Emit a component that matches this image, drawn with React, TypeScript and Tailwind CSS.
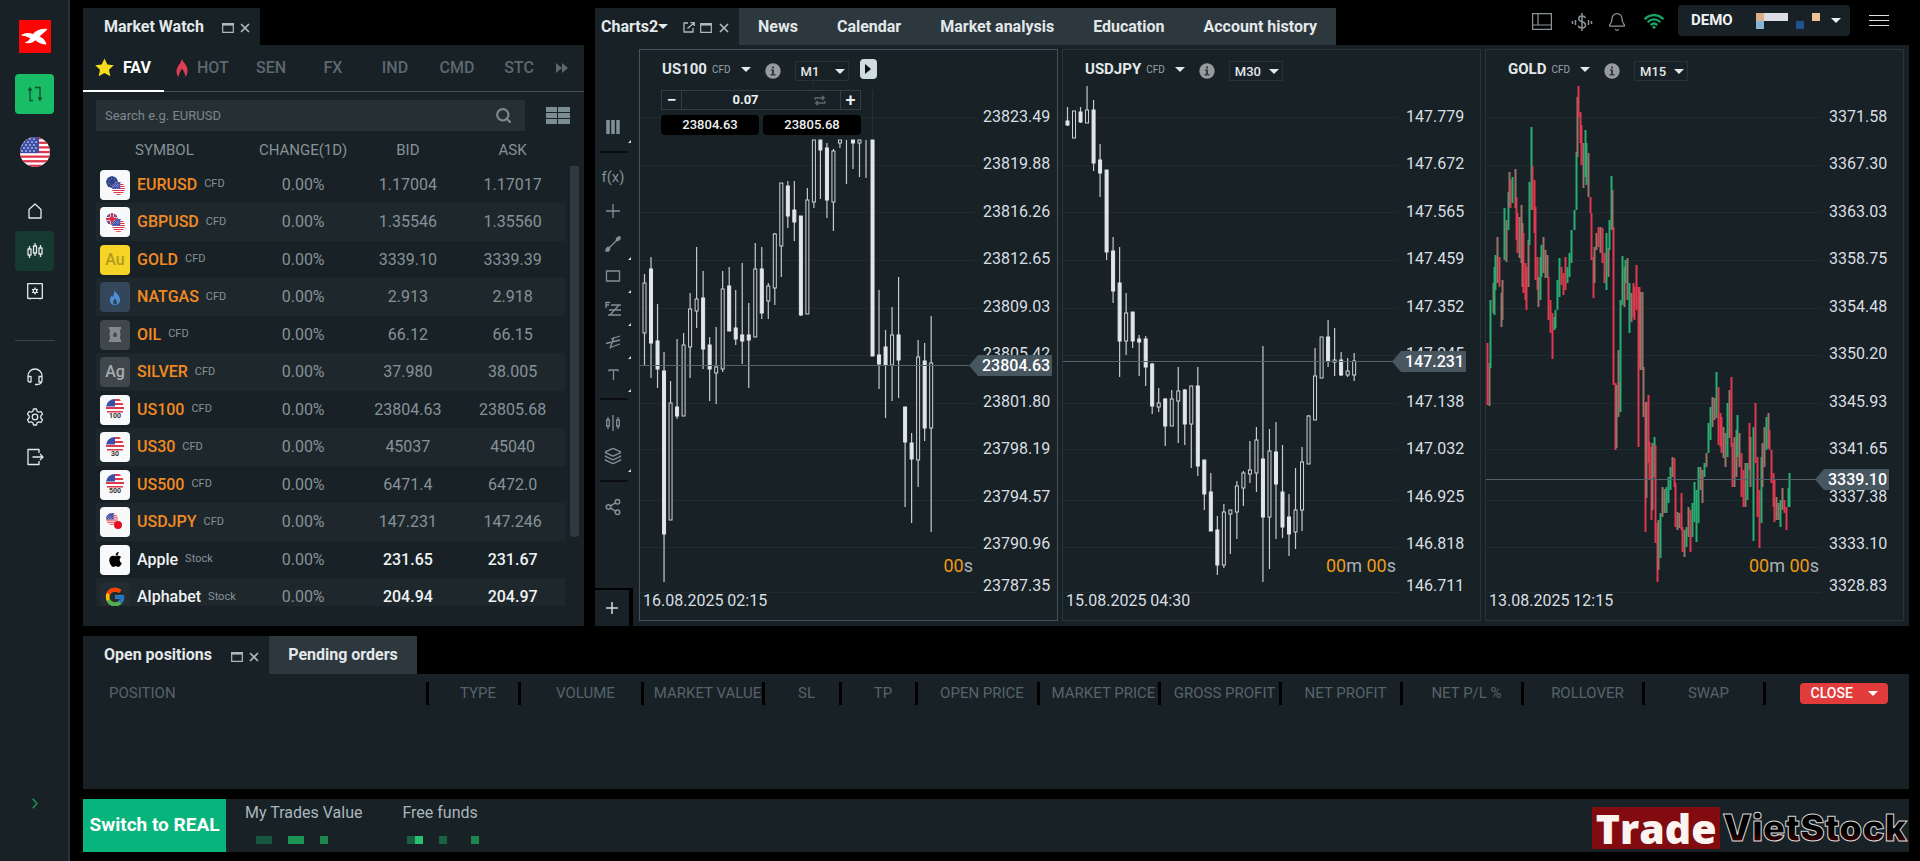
import { useState, type ReactNode } from "react";
import { Bell, Layers, Search, Share2, X } from "lucide-react";
import { FaApple } from "react-icons/fa";
import { FcGoogle } from "react-icons/fc";

// open, body and wick levels: high, body top, body bottom, low, 1 = filled
type Candle = [number, number, number, number, number];

const us100: Candle[] = [
    [224, 233, 283, 315, 0], [207, 219, 293, 328, 1], [254, 291, 319, 338, 1], [302, 321, 484, 532, 1], [331, 353, 470, 470, 0],
    [289, 357, 366, 369, 1], [283, 295, 366, 366, 0], [243, 259, 297, 328, 0], [197, 249, 261, 278, 0], [221, 248, 299, 319, 1],
    [287, 295, 319, 351, 1], [277, 317, 323, 354, 0], [221, 239, 319, 322, 0], [217, 236, 281, 281, 1], [240, 278, 289, 295, 1],
    [213, 285, 291, 314, 1], [253, 285, 290, 338, 1], [193, 219, 287, 287, 0], [197, 219, 263, 269, 1], [233, 236, 251, 269, 0],
    [183, 184, 238, 255, 0], [133, 133, 196, 227, 0], [131, 136, 166, 178, 1], [131, 160, 172, 191, 1], [166, 166, 265, 266, 1],
    [138, 150, 264, 264, 0], [90, 90, 152, 158, 0], [90, 90, 100, 149, 1], [93, 98, 150, 168, 1], [99, 101, 152, 181, 0],
    [90, 90, 93, 98, 0], [90, 90, 90, 134, 1], [90, 90, 93, 119, 1], [90, 90, 93, 127, 0], [90, 90, 90, 128, 1],
    [90, 90, 306, 306, 1], [240, 305, 314, 339, 1], [280, 297, 315, 368, 1], [257, 285, 315, 351, 0], [227, 285, 310, 348, 1],
    [357, 357, 392, 457, 1], [383, 393, 409, 473, 1], [290, 307, 410, 437, 0], [293, 311, 378, 391, 1], [266, 313, 378, 482, 0],
];

const usdjpy: Candle[] = [
    [57, 71, 75, 76, 1], [61, 61, 88, 88, 0], [57, 62, 72, 73, 1], [36, 60, 73, 73, 0], [50, 60, 113, 121, 1],
    [94, 110, 123, 147, 1], [120, 120, 202, 210, 1], [187, 201, 241, 253, 1], [197, 233, 291, 327, 1], [243, 263, 291, 305, 0],
    [262, 262, 291, 298, 1], [285, 289, 292, 326, 1], [286, 289, 317, 336, 1], [313, 314, 356, 364, 1], [338, 353, 357, 362, 0],
    [348, 349, 376, 396, 1], [340, 349, 376, 376, 0], [317, 341, 351, 393, 0], [339, 340, 374, 395, 1], [336, 336, 374, 418, 0],
    [317, 336, 416, 426, 1], [410, 410, 444, 460, 1], [423, 442, 481, 481, 1], [466, 480, 515, 525, 1], [454, 462, 515, 518, 0],
    [460, 460, 464, 504, 0], [431, 436, 462, 489, 0], [421, 423, 438, 456, 0], [391, 420, 424, 433, 0], [377, 390, 423, 442, 0],
    [296, 409, 467, 532, 1], [379, 401, 467, 519, 0], [372, 402, 434, 489, 1], [395, 442, 477, 488, 1], [444, 467, 484, 506, 1],
    [418, 460, 482, 499, 0], [397, 412, 460, 481, 0], [365, 366, 414, 414, 0], [298, 326, 370, 370, 0], [287, 287, 328, 328, 0],
    [270, 287, 311, 317, 1], [278, 310, 312, 326, 0], [302, 310, 325, 326, 1], [308, 321, 325, 327, 0], [303, 311, 325, 331, 0],
];

// x, top, bottom, colour
type Bar = [number, number, number, "r" | "g" | "m"];

const gold: Bar[] = [
    [1, 293, 355, "r"], [3, 313, 356, "m"], [4, 250, 318, "g"], [7, 233, 263, "m"], [8, 217, 265, "g"], [9, 205, 240, "g"],
    [11, 187, 233, "m"], [13, 207, 237, "r"], [15, 243, 277, "m"], [16, 230, 270, "m"], [18, 158, 210, "g"], [20, 170, 212, "m"],
    [22, 142, 180, "g"], [23, 122, 157, "m"], [24, 130, 158, "r"], [26, 127, 153, "g"], [29, 119, 158, "m"], [30, 147, 190, "r"],
    [31, 163, 203, "r"], [33, 167, 208, "m"], [35, 155, 213, "m"], [36, 173, 237, "m"], [37, 183, 243, "r"], [39, 213, 250, "r"],
    [40, 217, 260, "r"], [42, 190, 237, "m"], [43, 132, 195, "g"], [45, 77, 160, "g"], [46, 116, 160, "r"], [48, 130, 183, "r"],
    [49, 157, 230, "r"], [51, 207, 240, "r"], [52, 227, 257, "m"], [54, 207, 250, "g"], [55, 195, 227, "g"], [57, 187, 223, "m"],
    [59, 200, 228, "m"], [61, 205, 228, "m"], [62, 227, 270, "r"], [64, 250, 283, "r"], [66, 263, 309, "r"], [68, 267, 280, "g"],
    [69, 260, 278, "g"], [71, 230, 260, "g"], [73, 208, 247, "g"], [75, 217, 235, "r"], [77, 223, 245, "r"], [79, 207, 240, "r"],
    [81, 217, 233, "g"], [83, 203, 227, "g"], [85, 180, 213, "g"], [88, 160, 180, "g"], [90, 102, 160, "g"], [91, 47, 107, "m"],
    [92, 36, 67, "r"], [94, 62, 93, "r"], [95, 75, 115, "r"], [97, 93, 138, "m"], [99, 80, 127, "g"], [100, 93, 135, "g"],
    [102, 103, 147, "m"], [104, 147, 163, "r"], [105, 163, 210, "r"], [107, 207, 248, "r"], [108, 197, 233, "m"], [110, 183, 200, "m"],
    [112, 177, 197, "r"], [114, 177, 203, "m"], [116, 178, 213, "r"], [118, 203, 233, "r"], [120, 183, 240, "g"], [122, 198, 227, "m"],
    [123, 170, 200, "g"], [125, 126, 180, "g"], [126, 140, 180, "m"], [127, 177, 335, "r"], [129, 333, 400, "r"], [130, 335, 398, "m"],
    [132, 300, 367, "m"], [133, 332, 360, "r"], [134, 250, 362, "g"], [136, 206, 255, "g"], [138, 217, 257, "m"], [139, 210, 233, "g"],
    [141, 208, 250, "m"], [143, 233, 283, "g"], [145, 243, 272, "m"], [147, 233, 267, "r"], [148, 237, 270, "r"], [150, 215, 260, "r"],
    [152, 237, 397, "r"], [153, 237, 317, "r"], [154, 242, 320, "m"], [156, 242, 320, "m"], [157, 317, 367, "m"], [159, 352, 482, "r"],
    [160, 352, 448, "m"], [162, 345, 413, "r"], [163, 392, 430, "r"], [165, 397, 470, "r"], [166, 393, 460, "m"], [168, 387, 427, "g"],
    [169, 395, 493, "r"], [171, 473, 532, "r"], [172, 470, 520, "m"], [174, 463, 508, "g"], [176, 437, 467, "m"], [178, 439, 463, "m"],
    [180, 437, 463, "g"], [182, 427, 453, "g"], [184, 417, 440, "g"], [186, 407, 427, "m"], [188, 408, 437, "r"], [189, 433, 477, "r"],
    [191, 462, 480, "m"], [193, 463, 478, "m"], [195, 443, 480, "r"], [196, 477, 502, "r"], [198, 480, 507, "m"], [200, 477, 497, "g"],
    [202, 457, 487, "m"], [204, 460, 502, "r"], [206, 453, 487, "g"], [208, 432, 472, "g"], [210, 440, 492, "g"], [212, 417, 473, "g"],
    [214, 417, 440, "m"], [216, 420, 453, "m"], [218, 413, 427, "g"], [220, 403, 417, "m"], [222, 373, 403, "g"], [224, 357, 390, "g"],
    [226, 347, 377, "m"], [228, 348, 370, "m"], [230, 322, 368, "g"], [232, 337, 395, "r"], [234, 363, 397, "r"], [235, 367, 403, "r"],
    [237, 377, 408, "m"], [239, 383, 417, "m"], [241, 353, 407, "g"], [243, 340, 388, "m"], [245, 327, 397, "r"], [246, 393, 437, "r"],
    [248, 387, 437, "m"], [250, 380, 427, "m"], [251, 365, 407, "g"], [253, 383, 417, "m"], [255, 403, 447, "r"], [257, 420, 457, "r"],
    [259, 413, 457, "m"], [261, 413, 450, "g"], [263, 373, 420, "r"], [264, 387, 437, "m"], [267, 377, 491, "g"], [269, 353, 413, "r"],
    [271, 407, 467, "r"], [273, 440, 498, "r"], [275, 407, 473, "g"], [276, 393, 437, "m"], [278, 377, 417, "m"], [280, 367, 400, "g"],
    [282, 363, 398, "m"], [283, 380, 400, "r"], [285, 400, 433, "r"], [287, 423, 457, "r"], [288, 430, 472, "r"], [290, 447, 470, "m"],
    [292, 453, 470, "m"], [294, 450, 477, "g"], [296, 438, 460, "m"], [298, 450, 463, "r"], [300, 457, 480, "r"], [302, 438, 457, "g"],
    [303, 423, 457, "g"],
];

const barColors = { r: "#e0394f", g: "#27ae72", m: "#9a7468" };
const gridLines = [67, 115, 162, 210, 258, 305, 353, 399, 450, 497, 542];

const symbols = [
    { name: "EURUSD", kind: "CFD", bid: "1.17004", ask: "1.17017" },
    { name: "GBPUSD", kind: "CFD", bid: "1.35546", ask: "1.35560" },
    { name: "GOLD", kind: "CFD", bid: "3339.10", ask: "3339.39" },
    { name: "NATGAS", kind: "CFD", bid: "2.913", ask: "2.918" },
    { name: "OIL", kind: "CFD", bid: "66.12", ask: "66.15" },
    { name: "SILVER", kind: "CFD", bid: "37.980", ask: "38.005" },
    { name: "US100", kind: "CFD", bid: "23804.63", ask: "23805.68" },
    { name: "US30", kind: "CFD", bid: "45037", ask: "45040" },
    { name: "US500", kind: "CFD", bid: "6471.4", ask: "6472.0" },
    { name: "USDJPY", kind: "CFD", bid: "147.231", ask: "147.246" },
    { name: "Apple", kind: "Stock", bid: "231.65", ask: "231.67" },
    { name: "Alphabet", kind: "Stock", bid: "204.94", ask: "204.97" },
];

const positionColumns = [
    { label: "TYPE", width: "w-[92px]" },
    { label: "VOLUME", width: "w-[123px]" },
    { label: "MARKET VALUE", width: "w-[121px]" },
    { label: "SL", width: "w-[77px]" },
    { label: "TP", width: "w-[76px]" },
    { label: "OPEN PRICE", width: "w-[122px]" },
    { label: "MARKET PRICE", width: "w-[121px]" },
    { label: "GROSS PROFIT", width: "w-[121px]" },
    { label: "NET PROFIT", width: "w-[121px]" },
    { label: "NET P/L %", width: "w-[121px]" },
    { label: "ROLLOVER", width: "w-[121px]" },
    { label: "SWAP", width: "w-[121px]" },
];

function Caret({ className = "" }: { className?: string }) {
    return (
        <svg className={`h-[5px] w-[10px] shrink-0 ${className}`} viewBox="0 0 10 5" fill="currentColor">
            <path d="M0 0h10L5 5z" />
        </svg>
    );
}

function WindowIcon() {
    return (
        <svg className="h-[10px] w-3" viewBox="0 0 12 10" fill="none" stroke="currentColor">
            <path d="M.7.7h10.6v8.6H.7z" strokeWidth="1.2" />
            <path d="M0 1.3h12" strokeWidth="2.6" />
        </svg>
    );
}

function CloseIcon() {
    return <X className="h-[14px] w-[14px]" strokeWidth={3} />;
}

function Flag({ size = 30, className = "" }: { size?: number; className?: string }) {
    return (
        <svg width={size} height={size} viewBox="0 0 30 30" className={`rounded-full ${className}`}>
            <rect width="30" height="30" fill="#fff" />
            {[0, 1, 2, 3, 4, 5, 6].map((i) => (
                <rect key={i} y={i * 4.62} width="30" height="2.31" fill="#e0364b" />
            ))}
            <rect width="19" height="16.1" fill="#3b4fa8" />
            {[2, 5, 8, 11, 14].map((y, r) =>
                [2, 6, 10, 14].map((x) => (
                    <circle key={`${x}-${y}`} cx={x + (r % 2) * 2} cy={y} r=".8" fill="#fff" />
                ))
            )}
        </svg>
    );
}

function SymbolIcon({ name }: { name: string }) {
    const box = "relative flex h-[30px] w-[30px] shrink-0 items-center justify-center rounded";
    switch (name) {
        case "GOLD":
            return <span className={`${box} bg-[#f5d327] text-base font-medium text-[#b39a1a]`}>Au</span>;
        case "SILVER":
            return <span className={`${box} bg-[#3f474c] text-base font-medium text-[#a9adb0]`}>Ag</span>;
        case "NATGAS":
            return (
                <span className={`${box} bg-[#34465a]`}>
                    <svg width="12" height="15" viewBox="0 0 12 15">
                        <path d="M5.500 0C6 2.500 11 5 11 10c0 2.800-2 5-5 5s-5-2-5-5c0-2 .8-3.300 1.800-4.500l1 1.500C4.500 5 5.500 3 5.500 0z" fill="#4c8fd6" />
                        <path d="M6 8c.5 1.500 2 2.500 2 4.500a2 2 0 0 1-4 0C4 10.500 5.500 9.500 6 8z" fill="#34465a" />
                    </svg>
                </span>
            );
        case "OIL":
            return (
                <span className={`${box} bg-[#3f474c]`}>
                    <svg width="14" height="15" viewBox="0 0 15 16">
                        <path d="M1 0h13v2l-1 1v4l1 1-1 1v4l1 1v2H1v-2l1-1V9L1 8l1-1V3L1 2z" fill="#84898b" />
                        <path d="M7.500 5c.7 1.500 2 2.300 2 3.700a2 2 0 0 1-4 0c0-1.400 1.300-2.200 2-3.700z" fill="#3f474c" />
                    </svg>
                </span>
            );
        case "US100":
        case "US30":
        case "US500":
            return (
                <span className={`${box} flex-col bg-[#f8f9fb]`}>
                    <svg width="18" height="14" viewBox="0 0 18 14">
                        <path d="M0 9a9 9 0 0 1 18 0l-1 3H1z" fill="#fff" />
                        <path d="M9 0h4.500l1.500 2H9zM9 4h7.500l1 2H9zM0 8h18v2H0zM1 12h16v1.500H1z" fill="#dc3b4c" />
                        <path d="M0 7.500A9 9 0 0 1 9 0v7.500z" fill="#3b4fa8" />
                    </svg>
                    <span className="text-[7px] font-bold leading-[7px] text-[#333]">{name.slice(2)}</span>
                </span>
            );
        case "Apple":
            return (
                <span className={`${box} bg-[#f8f9fb] text-black`}>
                    <FaApple size={17} />
                </span>
            );
        case "Alphabet":
            return (
                <span className={`${box} bg-[#222c32]`}>
                    <FcGoogle size={22} />
                </span>
            );
        case "USDJPY":
            return (
                <span className={`${box} bg-[#f8f9fb]`}>
                    <Flag size={12} className="absolute left-[6px] top-[6px]" />
                    <span className="absolute left-[14px] top-[14px] h-2 w-2 rounded-full bg-[#e01020]" />
                </span>
            );
        default:
            return (
                <span className={`${box} bg-[#f8f9fb]`}>
                    <svg width="12" height="12" viewBox="0 0 12 12" className="absolute left-[6px] top-[6px] rounded-full">
                        <circle cx="6" cy="6" r="6" fill={name === "EURUSD" ? "#2c4390" : "#4456a5"} />
                        {name === "EURUSD" ? (
                            <circle cx="6" cy="6" r="3.500" fill="none" stroke="#b9a95a" strokeDasharray="1 2" />
                        ) : (
                            <g>
                                <path d="M6 0v12M0 6h12" stroke="#fff" strokeWidth="3.500" />
                                <path d="M6 0v12M0 6h12" stroke="#dc3048" strokeWidth="2" />
                                <path d="M2 2l8 8M10 2l-8 8" stroke="#dc3048" strokeWidth="1" />
                            </g>
                        )}
                    </svg>
                    <Flag size={13} className="absolute left-[12px] top-[12px]" />
                </span>
            );
    }
}

function SideButton({ label, active, children }: { label: string; active?: boolean; children: ReactNode }) {
    return (
        <button
            aria-label={label}
            className={`flex h-10 w-[39px] items-center justify-center rounded ${active ? "bg-[#173a30]" : ""}`}
        >
            <svg width="18" height="18" viewBox="0 0 18 18" fill="none" stroke="#e3e8ea" strokeWidth="1.300" strokeLinejoin="round">
                {children}
            </svg>
        </button>
    );
}

function Sidebar() {
    return (
        <nav className="flex w-[70px] shrink-0 flex-col items-center border-r-2 border-[#283137] bg-[#172126] pb-[52px] pl-px pt-5">
            <a href="#home" aria-label="Home page" className="flex h-[33px] w-8 items-center justify-center bg-[#fb0505]">
                <svg width="27" height="18" viewBox="0 0 27 18" fill="#fff">
                    <path d="M0 7.500C3.500 4.500 8 4.500 12 6 15 2.500 20 .3 26.500 1 25 3 21.500 6 18.500 8.500c3.500 1.500 6 4 7 8-4.500 0-8.500-1.500-11-4.200C11.500 15 7.500 16 3.500 14.500c2.700-.7 4.500-2 5.800-4.200C6 8.500 3.500 7.700 0 7.500z" />
                </svg>
            </a>
            <button aria-label="New order" className="mt-[21px] flex h-10 w-[39px] items-center justify-center rounded bg-[#18bd66]">
                <svg width="16" height="16" viewBox="0 0 16 16" fill="none" stroke="#0e4a2e" strokeWidth="1.300">
                    <path d="M6 14.500H3V3M1.300 4.500L3 2l1.700 2.500M8 1.500h5V13M11.300 11.500L13 14l1.700-2.500" />
                </svg>
            </button>
            <button aria-label="Language" className="mt-[23px]">
                <Flag />
            </button>
            <div className="mt-6 flex flex-col">
                <SideButton label="Home">
                    <path d="M3 7.500L9 2l6 5.500V16H3z" />
                </SideButton>
                <SideButton label="Trading" active>
                    <path d="M3.500 4v3M3.500 13v3M9 1v3M9 11v3M14.500 3v3M14.500 12v3M2 7h3v6H2zM7.500 4h3v7h-3zM13 6h3v6h-3z" />
                </SideButton>
                <SideButton label="Deposit">
                    <path d="M1.700 1.700h14.600v14.600H1.700zM4 16.300V17.500M14 16.300V17.500M9 5.500v7M6 7.200l6 3.600M12 7.200l-6 3.600" />
                    <circle cx="9" cy="9" r="1.800" fill="#172126" />
                </SideButton>
            </div>
            <hr className="mt-[29px] mb-4 w-10 border-[#384248]" />
            <div className="flex flex-col">
                <SideButton label="Support">
                    <path d="M2 9.500V8a7 7 0 0 1 14 0v4c0 3-2 4.500-5 4.500H9M2 8.500h3V14H3.500C2.500 14 2 13.500 2 12.500zM16 8.500h-3V14h1.500c1 0 1.500-.5 1.500-1.500z" />
                </SideButton>
                <SideButton label="Settings">
                    <path d="M7.500 1h3l.6 2.300 1.600.9 2.300-.7 1.500 2.600L14.800 8v2l1.700 1.800-1.500 2.700-2.300-.7-1.600.9-.6 2.300h-3l-.6-2.300-1.600-.9-2.300.7-1.500-2.700L3.200 10V8L1.500 6.100 3 3.500l2.300.7 1.600-.9z" />
                    <circle cx="9" cy="9" r="2.800" />
                </SideButton>
                <SideButton label="Log out">
                    <path d="M13 5V1.500H2v15h11V13M6.500 9H17M14 6l3 3-3 3" />
                </SideButton>
            </div>
            <button aria-label="Expand menu" className="mt-auto">
                <svg width="6" height="11" viewBox="0 0 6 11" fill="none" stroke="#1f9d5c" strokeWidth="1.300">
                    <path d="M.7.7L5 5.500.7 10.300" />
                </svg>
            </button>
        </nav>
    );
}

const categories = ["SEN", "FX", "IND", "CMD", "STC"];

function MarketWatch() {
    const [query, setQuery] = useState("");
    return (
        <section className="flex w-[501px] shrink-0 flex-col">
            <div className="flex h-[37px] w-[177px] shrink-0 items-center bg-[#172126] pl-[21px]">
                <h2 className="text-base font-bold">Market Watch</h2>
                <div className="ml-auto mr-[8px] mt-[2px] flex items-center gap-1 text-[#aeb8bd]">
                    <WindowIcon />
                    <CloseIcon />
                </div>
            </div>
            <div className="flex min-h-0 flex-1 flex-col bg-[#172126] pb-5">
                <div className="flex h-[47px] shrink-0 items-stretch border-b border-[#465057] text-base font-medium text-[#5d686e]">
                    <button className="-mb-px flex w-[81px] items-center gap-[9px] border-b-2 border-white pl-3 font-bold text-white">
                        <svg width="19" height="19" viewBox="0 0 19 19" fill="#f7dc1e">
                            <path d="M9.500.5l2.800 6 6.500.8-4.800 4.500 1.300 6.500-5.800-3.200-5.800 3.200L5 11.800.2 7.300l6.500-.8z" />
                        </svg>
                        FAV
                    </button>
                    <button className="flex w-[76px] items-center gap-2 pl-[11px]">
                        <svg width="14" height="18" viewBox="0 0 14 14" fill="#e03e52" preserveAspectRatio="none">
                            <path d="M7 0c.6 2.500 5.500 4.500 5.500 9 0 2-.8 4-2.300 5 .2-2-.7-4-3.200-6.500-2.500 2.500-3.400 4.500-3.200 6.500C2.300 13 1.500 11.500 1.500 9.500 1.500 6 5.500 4 7 0z" />
                        </svg>
                        HOT
                    </button>
                    {categories.map((c) => (
                        <button key={c} className="w-[62px]">
                            {c}
                        </button>
                    ))}
                    <button aria-label="More categories" className="pl-[6px]">
                        <svg width="12" height="10" viewBox="0 0 12 10" fill="currentColor">
                            <path d="M0 0l6 5-6 5zM6 0l6 5-6 5z" />
                        </svg>
                    </button>
                </div>
                <div className="mt-2 flex h-[31px] shrink-0 items-center pl-[13px] pr-[14px]">
                    <label className="flex h-full flex-1 items-center bg-[#262f34] px-[9px]">
                        <input
                            aria-label="Search"
                            value={query}
                            onChange={(e) => setQuery(e.target.value)}
                            placeholder="Search e.g. EURUSD"
                            className="flex-1 bg-transparent text-[13px] outline-none placeholder:text-[#7d878c]"
                        />
                        <Search className="mr-1 h-[17px] w-[17px] text-[#7f8a8f]" strokeWidth={3} />
                    </label>
                    <button aria-label="Grid view" className="ml-[21px]">
                        <svg width="24" height="17" viewBox="0 0 24 17" fill="#7b8c93">
                            <path d="M0 0h11v5H0zM12 0h12v5H12zM0 6h11v5H0zM12 6h12v5H12zM0 12h11v5H0zM12 12h12v5H12z" />
                        </svg>
                    </button>
                </div>
                <div className="flex min-h-0 flex-1 overflow-hidden pl-[13px]">
                    <div className="flex-1">
                        <table className="w-full table-fixed text-center text-base text-[#879197]">
                            <thead className="text-[15px]">
                                <tr className="h-[35px]">
                                    <th className="w-[33%] pb-0 pl-[39px] pt-1 text-left font-normal">SYMBOL</th>
                                    <th className="pb-0 pt-1 font-normal">CHANGE(1D)</th>
                                    <th className="pb-0 pt-1 font-normal">BID</th>
                                    <th className="pb-0 pt-1 font-normal">ASK</th>
                                </tr>
                            </thead>
                            <tbody>
                                {symbols.map((s) => {
                                    const stock = s.kind === "Stock";
                                    return (
                                        <tr key={s.name} className="h-[37px] even:h-[38px] even:bg-[#1e282c]">
                                            <td className="p-0 pl-1">
                                                <div className="flex items-center">
                                                    <SymbolIcon name={s.name} />
                                                    <span className={`ml-[7px] font-medium ${stock ? "text-[#f0f3f4]" : "text-[#f28a22]"}`}>{s.name}</span>
                                                    <span className="ml-[7px] text-[11px]">{s.kind}</span>
                                                </div>
                                            </td>
                                            <td className="p-0">0.00%</td>
                                            <td className={stock ? "p-0 font-medium text-[#f0f3f4]" : "p-0"}>{s.bid}</td>
                                            <td className={stock ? "p-0 font-medium text-[#f0f3f4]" : "p-0"}>{s.ask}</td>
                                        </tr>
                                    );
                                })}
                            </tbody>
                        </table>
                    </div>
                    <div className="ml-[5px] mr-[5px] mt-[35px] h-[371px] w-[9px] rounded-b bg-[#30393f]" />
                </div>
            </div>
        </section>
    );
}

function Tool({ label, corner, children }: { label: string; corner?: boolean; children: ReactNode }) {
    return (
        <button aria-label={label} className="relative flex h-[33px] w-9 items-center justify-center">
            <svg width="18" height="18" viewBox="0 0 18 18" fill="none" stroke="currentColor" strokeWidth="1.300">
                {children}
            </svg>
            {corner && (
                <svg className="absolute bottom-0 right-0" width="3" height="3" viewBox="0 0 3 3">
                    <path d="M3 0v3H0z" fill="#d5dadd" />
                </svg>
            )}
        </button>
    );
}

function Toolbar() {
    return (
        <div className="flex w-[38px] flex-col text-[#829097]">
            <div className="flex flex-1 flex-col pt-[65px]">
                <Tool label="Layout" corner>
                    <path d="M4 2v14M9 2v14M14 2v14" strokeWidth="3.500" />
                </Tool>
                <hr className="mx-[5px] my-2 border-t-2 border-[#0a0e10]" />
                <button className="h-[33px] w-9 text-[15px]">f(x)</button>
                <Tool label="Crosshair">
                    <path d="M9 2v14M2 9h14" />
                </Tool>
                <Tool label="Trend line" corner>
                    <path d="M4 14L14 4" />
                    <path d="M2 14.500l1.500-2h2v2l-1 1.500H2zM12.500 3.500L14.500 2H16v2l-2 1.500h-1.500z" fill="currentColor" />
                </Tool>
                <Tool label="Rectangle" corner>
                    <path d="M2.500 3h13v10h-13z" />
                </Tool>
                <Tool label="Fibonacci" corner>
                    <path d="M7 4h10M5 9h12M4 14h13M15 4L6 14M2 7V1.500h4M2 4h3" />
                </Tool>
                <Tool label="Pitchfork" corner>
                    <path d="M7 5l9-3M2 9.500l14-3.500M6 13.500l10-3.500M10 3L6 14.500" />
                </Tool>
                <Tool label="Text" corner>
                    <path d="M5 4.500V3h9v1.500M9.500 3v10" />
                </Tool>
                <hr className="mx-[5px] my-[6px] border-t-2 border-[#0a0e10]" />
                <Tool label="Candles">
                    <path d="M9 1v16M4 3v3M4 12v3M14 3v3M14 12v3M2.700 6h2.600v6H2.700zM12.700 6h2.600v6h-2.600z" />
                </Tool>
                <button aria-label="Layers" className="relative flex h-[33px] w-9 items-center justify-center">
                    <Layers className="h-[18px] w-[18px]" strokeWidth={2} />
                    <svg className="absolute bottom-0 right-0" width="3" height="3" viewBox="0 0 3 3">
                        <path d="M3 0v3H0z" fill="#d5dadd" />
                    </svg>
                </button>
                <hr className="mx-[5px] my-2 border-t-2 border-[#0a0e10]" />
                <button aria-label="Share" className="flex h-[33px] w-9 items-center justify-center">
                    <Share2 className="h-[18px] w-[18px]" strokeWidth={2} />
                </button>
            </div>
            <button aria-label="Add chart" className="flex h-[38px] w-[38px] items-center justify-center border-t-2 border-r-4 border-black text-[#d5dadd]">
                <svg width="12" height="12" viewBox="0 0 12 12" stroke="currentColor" strokeWidth="1.500">
                    <path d="M6 0v12M0 6h12" />
                </svg>
            </button>
        </div>
    );
}

function CandleSeries({ data }: { data: Candle[] }) {
    return (
        <g>
            {data.map(([high, top, bottom, low, filled], i) => {
                const x = 4.5 + i * 6.515;
                return (
                    <g key={i}>
                        <path d={`M${x} ${high}V${top}M${x} ${bottom}V${low}`} stroke="#c4cacd" strokeWidth="1.200" />
                        {bottom > top && (
                            <rect
                                x={x - 1.5}
                                y={top}
                                width="3"
                                height={bottom - top}
                                fill={filled ? "#e2e6e9" : "#172126"}
                                stroke={filled ? "#e2e6e9" : "#d0d5d8"}
                            />
                        )}
                    </g>
                );
            })}
        </g>
    );
}

type ChartProps = {
    symbol: string;
    interval: string;
    prices: string[];
    price: string;
    priceY: number;
    date: string;
    countdown: string[];
    selected?: boolean;
    children: ReactNode;
};

function Chart({ symbol, interval, prices, price, priceY, date, countdown, selected, children }: ChartProps) {
    return (
        <article className={`relative flex min-w-0 flex-1 flex-col border ${selected ? "border-[#45545c]" : "border-[#27343a]"}`}>
            <div className="absolute inset-y-0 left-0 right-[74px]">
                <svg className="h-full w-full" viewBox="0 0 343 570" preserveAspectRatio="none">
                    {gridLines.map((y) => (
                        <path key={y} d={`M0 ${y + 0.5}H335`} stroke="#1f2b30" />
                    ))}
                    {children}
                    <path d={`M0 ${priceY + 0.5}H330`} stroke="#55646b" />
                </svg>
            </div>
            <header className="relative flex h-[43px] items-start pl-[22px] pt-[9px]">
                <button className="flex h-5 items-center">
                    <span className="text-[15px] font-bold">{symbol}</span>
                    <span className="ml-[5px] text-[10px] text-[#9aa4a9]">CFD</span>
                    <Caret className="ml-[10px]" />
                </button>
                <button aria-label={`${symbol} info`} className="ml-[14px] mt-1">
                    <svg width="16" height="16" viewBox="0 0 16 16">
                        <circle cx="8" cy="8" r="7.700" fill="#979b9d" />
                        <path d="M7 3.500h2v2H7zM6 6.500h3v4.500h1.500v1.500h-5V11H7V8H6z" fill="#353d41" />
                    </svg>
                </button>
                <label className="relative ml-[14px] mt-[2px] flex items-center">
                    <select
                        aria-label={`${symbol} interval`}
                        defaultValue={interval}
                        className="h-5 w-[54px] appearance-none border border-[#273238] bg-[#172126] pl-[5px] text-[13px] font-medium outline-none"
                    >
                        <option>{interval}</option>
                    </select>
                    <Caret className="pointer-events-none absolute right-1" />
                </label>
                {selected && (
                    <button aria-label="Trade panel" className="ml-[11px] flex h-5 w-[17px] items-center justify-center rounded-sm bg-[#cfdce0]">
                        <svg width="6" height="10" viewBox="0 0 6 10" fill="#0b1215">
                            <path d="M0 0l6 5-6 5z" />
                        </svg>
                    </button>
                )}
            </header>
            <div className="relative flex min-h-0 flex-1">
                <div className="flex flex-1 flex-col pb-[7px] pl-[3px]">
                    {selected && <QuickTrade />}
                    <p className="mt-auto mb-[11px] h-6 pr-[10px] text-right text-lg leading-6 text-[#a9b4ba]">
                        {countdown.map((unit, i) => (
                            <span key={unit}>
                                {i > 0 && " "}
                                <span className="text-[#ee9a14]">00</span>
                                {unit}
                            </span>
                        ))}
                    </p>
                    <time className="h-6 text-base leading-6 text-[#d9dfe2]">{date}</time>
                </div>
                <div className="flex w-[74px] flex-col pb-[16px] text-base text-[#d9dfe2]">
                    {prices.map((p, i) => (
                        <span key={p} className={i < 10 ? "flex flex-1 items-center" : "flex h-9 items-center"}>
                            {p}
                        </span>
                    ))}
                </div>
            </div>
            <div className="absolute right-0 w-[88px]" style={{ top: `${((priceY - 10) / 570) * 100}%` }}>
                <div className="flex w-max items-center text-base font-medium leading-[21px] text-white">
                    <svg width="13" height="21" viewBox="0 0 13 21" fill="#485660">
                        <path d="M13 0H9L0 10.500 9 21h4z" />
                    </svg>
                    <span className="bg-[#485660] pr-[2px]">{price}</span>
                </div>
            </div>
        </article>
    );
}

function QuickTrade() {
    return (
        <div className="-mt-[3px] ml-[18px] w-[200px] text-[13px] font-medium text-[#eef1f2]">
            <div className="flex h-5 items-stretch border border-[#323e44] bg-[#172126]">
                <button aria-label="Decrease volume" className="flex w-5 items-center justify-center border-r border-[#323e44] text-lg leading-none">
                    −
                </button>
                <input aria-label="Volume" defaultValue="0.07" className="w-[127px] bg-transparent text-center font-bold outline-none" />
                <button aria-label="Reset volume" className="flex flex-1 items-center pl-[5px] text-[#5c686e]">
                    <svg width="12" height="11" viewBox="0 0 12 11" fill="none" stroke="currentColor" strokeWidth="1.300">
                        <path d="M1 5V3h9M8 .7L10.300 3 8 5.300M11 6v2H2M4 5.700L1.700 8 4 10.300" />
                    </svg>
                </button>
                <button aria-label="Increase volume" className="flex w-5 items-center justify-center border-l border-[#323e44] text-lg leading-none">
                    +
                </button>
            </div>
            <div className="flex gap-1 pt-[5px]">
                <button className="h-5 flex-1 rounded bg-black">23804.63</button>
                <button className="h-5 flex-1 rounded bg-black">23805.68</button>
            </div>
        </div>
    );
}

const navTabs = ["News", "Calendar", "Market analysis", "Education", "Account history"];

function TopBar() {
    return (
        <div className="flex h-[37px] shrink-0 items-start">
            <div className="flex h-full w-[144px] items-center bg-[#172126] pl-[6px] text-base font-bold">
                <button className="flex items-center">
                    Charts2
                    <Caret />
                </button>
                <div className="ml-auto mr-2 mt-[2px] flex items-center gap-[5px] text-[#aeb8bd]">
                    <svg width="12" height="11" viewBox="0 0 12 11" fill="none" stroke="currentColor" strokeWidth="1.300">
                        <path d="M5 1H1v9h9V6M4.500 6.500L11 1M7.500 .7H11.300V4" />
                    </svg>
                    <WindowIcon />
                    <CloseIcon />
                </div>
            </div>
            <nav className="flex h-full items-center gap-px bg-[#2d373e] text-base font-bold">
                {navTabs.map((t) => (
                    <a key={t} href="#tab" className="px-[19px]">
                        {t}
                    </a>
                ))}
            </nav>
            <div className="-mt-[3px] ml-auto flex items-center pr-5 text-[#8b9499]">
                <svg className="mt-px" width="20" height="17" viewBox="0 0 20 17" fill="none" stroke="currentColor" strokeWidth="1.200">
                    <path d="M.6.6h18.800v15.800H.6zM6 .6V12M.6 12h18.800" />
                </svg>
                <svg className="ml-[19px] mt-[2px]" width="22" height="18" viewBox="0 0 22 18" fill="none" stroke="currentColor" strokeWidth="1.500">
                    <path d="M14.500 5c-.5-1.300-1.700-2-3.500-2S7.700 4 7.700 5.700C7.700 9.500 14.500 7.500 14.500 12c0 1.700-1.300 3-3.500 3s-3.500-1-3.700-2.300M11 0v18M4.500 7v5M1.500 8v3M17.500 7v5M20.500 8v3" />
                </svg>
                <Bell className="ml-[14px] mt-[2px] h-5 w-5" strokeWidth={1.500} />
                <svg className="ml-[17px] mt-[2px]" width="20" height="15" viewBox="0 0 20 15" fill="none" stroke="#19a463" strokeWidth="2.300">
                    <path d="M.7 5.300C6-.3 14-.3 19.300 5.300M3.700 8.200c3.700-3.700 8.900-3.700 12.600 0M6.700 11.100c2-1.900 4.600-1.900 6.600 0" />
                    <circle cx="10" cy="13.300" r="1.500" fill="#19a463" stroke="none" />
                </svg>
                <button className="ml-[14px] flex h-[31px] w-[172px] items-center rounded bg-[#172126] pl-[13px] text-[15px] font-bold text-[#eef1f2]">
                    DEMO
                    <svg className="ml-auto" width="64" height="16" viewBox="0 0 64 16" shapeRendering="crispEdges">
                        <path d="M0 0h8v8H0z" fill="#d9ae8b" />
                        <path d="M8 0h24v8H8z" fill="#dcdce4" />
                        <path d="M0 8h8v8H0z" fill="#84b6d9" />
                        <path d="M40 8h8v8h-8z" fill="#21518f" />
                        <path d="M56 0h8v8h-8z" fill="#efc293" />
                    </svg>
                    <Caret className="ml-[11px] mr-[9px]" />
                </button>
                <button aria-label="Menu" className="ml-[19px]">
                    <svg width="20" height="13" viewBox="0 0 20 13" stroke="#d9dfe2">
                        <path d="M0 1.500h20M0 6.500h20M0 11.500h20" />
                    </svg>
                </button>
            </div>
        </div>
    );
}

function Positions() {
    return (
        <section className="mt-[10px] shrink-0">
            <div className="flex h-[38px]">
                <div className="flex w-[186px] items-center bg-[#172126] pl-[21px]">
                    <h2 className="text-base font-bold">Open positions</h2>
                    <div className="ml-auto mr-2 mt-1 flex items-center gap-1 text-[#aeb8bd]">
                        <WindowIcon />
                        <CloseIcon />
                    </div>
                </div>
                <button className="w-[148px] bg-[#2d373e] text-base font-bold">Pending orders</button>
            </div>
            <div className="h-[115px] bg-[#172126] pt-[6px]">
                <table className="w-full table-fixed text-[15px] text-[#57636a]">
                    <thead>
                        <tr className="h-[26px]">
                            <th className="w-[346px] p-0 text-left font-normal">
                                <span className="flex h-[23px] items-center border-r-[3px] border-black pl-[26px]">POSITION</span>
                            </th>
                            {positionColumns.map((c) => (
                                <th key={c.label} className={`${c.width} p-0 font-normal`}>
                                    <span className="flex h-[23px] items-center justify-center whitespace-nowrap border-r-[3px] border-black pl-[9px]">
                                        {c.label}
                                    </span>
                                </th>
                            ))}
                            <th className="w-[143px] p-0 pl-3">
                                <button className="mx-auto flex h-[21px] w-[88px] items-center justify-between rounded bg-[#e23b3b] pl-[11px] pr-[10px] text-sm font-medium text-white">
                                    CLOSE
                                    <Caret />
                                </button>
                            </th>
                        </tr>
                    </thead>
                </table>
            </div>
        </section>
    );
}

function Footer() {
    return (
        <footer className="mt-[10px] mb-[9px] flex h-[53px] shrink-0 bg-[#172126] text-base">
            <button className="w-[143px] whitespace-nowrap bg-[#06b47c] text-[19px] font-bold text-white">Switch to REAL</button>
            <dl className="flex gap-10 pl-[19px] pt-[2px] text-[#aab6bb]">
                <div>
                    <dt>My Trades Value</dt>
                    <dd className="mt-[11px] ml-[11px] flex">
                        <i className="mr-4 h-2 w-4 bg-[#195641]" />
                        <i className="mr-4 h-2 w-4 bg-[#1c9455]" />
                        <i className="h-2 w-2 bg-[#1b8650]" />
                    </dd>
                </div>
                <div>
                    <dt>Free funds</dt>
                    <dd className="mt-[11px] ml-[5px] flex">
                        <i className="h-2 w-2 bg-[#195f44]" />
                        <i className="mr-4 h-2 w-2 bg-[#2ac26d]" />
                        <i className="mr-6 h-2 w-2 bg-[#1a6145]" />
                        <i className="h-2 w-2 bg-[#1b8650]" />
                    </dd>
                </div>
            </dl>
            <div className="ml-auto mt-2 flex h-[42px] items-center overflow-hidden">
                <span className="flex h-full items-center bg-[#820b10] px-1 font-['Open_Sans'] text-[41px] font-extrabold leading-none text-[#faf3f0]">
                    Trade
                </span>
                <span className="bg-linear-to-b from-black from-50% to-[#7a0c12] bg-clip-text px-[2px] font-['Inter'] text-[37px] font-black leading-[42px] text-transparent [-webkit-text-stroke:1px_#d8d8d8]">
                    VietStock
                </span>
            </div>
        </footer>
    );
}

export default function App() {
    return (
        <div className="flex h-screen min-h-[840px] overflow-hidden bg-black font-['Roboto',sans-serif] text-[#e3e8ea]">
            <Sidebar />
            <main className="flex min-w-0 flex-1 flex-col pl-[13px] pr-[11px] pt-2">
                <div className="flex min-h-0 flex-1 gap-[11px]">
                    <MarketWatch />
                    <section className="flex min-w-0 flex-1 flex-col">
                        <TopBar />
                        <div className="flex min-h-0 flex-1 bg-[#172126]">
                            <Toolbar />
                            <div className="flex flex-1 gap-1 pb-[5px] pl-[6px] pr-[5px] pt-1">
                                <Chart
                                    symbol="US100"
                                    interval="M1"
                                    price="23804.63"
                                    priceY={315}
                                    date="16.08.2025 02:15"
                                    countdown={["s"]}
                                    selected
                                    prices={["23823.49", "23819.88", "23816.26", "23812.65", "23809.03", "23805.42", "23801.80", "23798.19", "23794.57", "23790.96", "23787.35"]}
                                >
                                    <path d="M173.500 32V40M232.500 40V90" stroke="#242f35" />
                                    <CandleSeries data={us100} />
                                </Chart>
                                <Chart
                                    symbol="USDJPY"
                                    interval="M30"
                                    price="147.231"
                                    priceY={311}
                                    date="15.08.2025 04:30"
                                    countdown={["m", "s"]}
                                    prices={["147.779", "147.672", "147.565", "147.459", "147.352", "147.245", "147.138", "147.032", "146.925", "146.818", "146.711"]}
                                >
                                    <CandleSeries data={usdjpy} />
                                </Chart>
                                <Chart
                                    symbol="GOLD"
                                    interval="M15"
                                    price="3339.10"
                                    priceY={429}
                                    date="13.08.2025 12:15"
                                    countdown={["m", "s"]}
                                    prices={["3371.58", "3367.30", "3363.03", "3358.75", "3354.48", "3350.20", "3345.93", "3341.65", "3337.38", "3333.10", "3328.83"]}
                                >
                                    {gold.map(([x, top, bottom, c], i) => (
                                        <path key={i} d={`M${x + 0.5} ${top}V${bottom}`} stroke={barColors[c]} strokeWidth="2" />
                                    ))}
                                </Chart>
                            </div>
                        </div>
                    </section>
                </div>
                <Positions />
                <Footer />
            </main>
        </div>
    );
}
